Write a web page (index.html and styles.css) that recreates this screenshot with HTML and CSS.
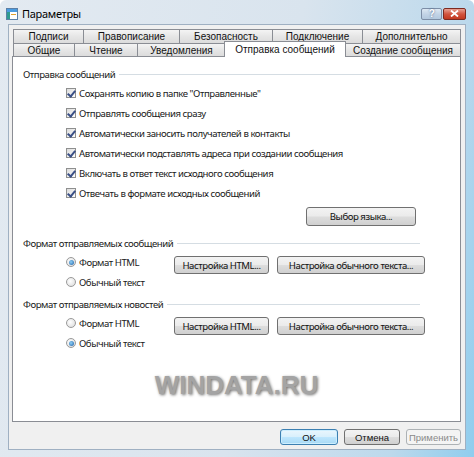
FILE: index.html
```html
<!DOCTYPE html>
<html lang="ru">
<head>
    <meta charset="UTF-8">
    <title>Параметры</title>
    <link rel="stylesheet" href="styles.css">
</head>
<body>
<div class="window">
    <!-- Title bar -->
    <div class="titlebar">
        <svg class="app-icon" width="12" height="12" viewBox="0 0 12 12">
            <rect x="0.5" y="0.5" width="11" height="11" fill="#fff" stroke="#5b7fa6"/>
            <rect x="1" y="1" width="10" height="3" fill="#4a9be0"/>
            <rect x="1" y="4" width="3" height="7" fill="#2f9a8f"/>
            <rect x="5" y="6" width="5" height="1" fill="#e0a030"/>
        </svg>
        <span class="title">Параметры</span>
        <div class="caption-buttons">
            <span class="cap-btn help">?</span>
            <span class="cap-btn close">
                <svg width="9" height="7" viewBox="0 0 9 7"><path d="M1 0.5 L8 6.5 M8 0.5 L1 6.5" stroke="#fff" stroke-width="1.8"/></svg>
            </span>
        </div>
    </div>

    <div class="client">
        <!-- Tabs -->
        <div class="tabs">
            <div class="tab-row row-back">
                <div class="tab">Подписи</div>
                <div class="tab">Правописание</div>
                <div class="tab">Безопасность</div>
                <div class="tab">Подключение</div>
                <div class="tab">Дополнительно</div>
            </div>
            <div class="tab-row row-front">
                <div class="tab">Общие</div>
                <div class="tab">Чтение</div>
                <div class="tab">Уведомления</div>
                <div class="tab active">Отправка сообщений</div>
                <div class="tab">Создание сообщения</div>
            </div>
        </div>

        <!-- Page: Отправка сообщений -->
        <div class="panel">
            <div class="group-head"><span>Отправка сообщений</span></div>
            <div class="options">
                <label class="opt"><span class="check on"></span>Сохранять копию в папке "Отправленные"</label>
                <label class="opt"><span class="check on"></span>Отправлять сообщения сразу</label>
                <label class="opt"><span class="check on"></span>Автоматически заносить получателей в контакты</label>
                <label class="opt"><span class="check on"></span>Автоматически подставлять адреса при создании сообщения</label>
                <label class="opt"><span class="check on"></span>Включать в ответ текст исходного сообщения</label>
                <label class="opt"><span class="check on"></span>Отвечать в формате исходных сообщений</label>
            </div>
            <div class="lang-row">
                <button class="btn lang">Выбор языка...</button>
            </div>

            <div class="group-head second"><span>Формат отправляемых сообщений</span></div>
            <div class="format">
                <div class="format-row">
                    <label class="opt radio-opt"><span class="radio on"></span>Формат HTML</label>
                    <button class="btn html">Настройка HTML...</button>
                    <button class="btn plain">Настройка обычного текста...</button>
                </div>
                <div class="format-row">
                    <label class="opt radio-opt"><span class="radio"></span>Обычный текст</label>
                </div>
            </div>

            <div class="group-head third"><span>Формат отправляемых новостей</span></div>
            <div class="format">
                <div class="format-row">
                    <label class="opt radio-opt"><span class="radio"></span>Формат HTML</label>
                    <button class="btn html">Настройка HTML...</button>
                    <button class="btn plain">Настройка обычного текста...</button>
                </div>
                <div class="format-row">
                    <label class="opt radio-opt"><span class="radio on"></span>Обычный текст</label>
                </div>
            </div>

            <div class="watermark">WINDATA.RU</div>
        </div>

        <!-- Dialog buttons -->
        <div class="footer">
            <button class="btn ok">OK</button>
            <button class="btn cancel">Отмена</button>
            <button class="btn apply" disabled>Применить</button>
        </div>
    </div>
</div>
</body>
</html>
```

FILE: styles.css
```css
* {
    box-sizing: border-box;
}
body {
    margin: 0;
    font-family: "Noto Sans", "Open Sans", sans-serif;
    font-size: 9.6px;
    letter-spacing: -0.45px;
    color: #1a1a1a;
}
.window {
    width: 474px;
    height: 457px;
    display: flex;
    flex-direction: column;
    padding: 0 8px 7px 8px;
    background: linear-gradient(100deg, #e3eaf1 0%, #d9e4ee 55%, #bcd9ec 85%, #8fcdee 100%);
    border-radius: 6px 6px 0 0;
    overflow: hidden;
}
.titlebar {
    height: 24px;
    margin: 0 -8px;
    padding: 3px 8px 0 6px;
    display: flex;
    align-items: center;
}
.app-icon {
    margin-right: 4px;
}
.title {
    font-size: 11px;
    letter-spacing: -0.3px;
    color: #000;
}
.caption-buttons {
    margin-left: auto;
    display: flex;
    gap: 1px;
}
.cap-btn {
    height: 12px;
    display: flex;
    align-items: center;
    justify-content: center;
    border: 1px solid #7d8ea6;
    border-radius: 2px;
}
.cap-btn.help {
    width: 21px;
    background: linear-gradient(#dde8f3, #c3d4e6 50%, #b3c8de);
    color: #fff;
    font-family: "Liberation Sans", sans-serif;
    font-weight: bold;
    font-size: 10px;
    text-shadow: 0 0 2px #3d5a80;
}
.cap-btn.close {
    width: 23px;
    border-color: #7d2a20;
    background: linear-gradient(#e8a193, #d2553f 50%, #c2381f);
}

/* client area */
.client {
    flex: 1;
    display: flex;
    flex-direction: column;
    padding: 4px 4px 0 3px;
    background: #f0f0f0;
    border: 1px solid #9fb0c2;
}

/* tabs */
.tabs {
    padding-left: 1px;
    font-family: "Liberation Sans", sans-serif;
    font-size: 10px;
    letter-spacing: 0;
    color: #111;
}
.tab-row {
    display: grid;
}
.row-back {
    height: 14px;
    grid-template-columns: 70px 96px 93px 90px 99px;
}
.row-front {
    height: 13px;
    grid-template-columns: 61px 63px 88px 120px 116px;
}
.tab {
    display: flex;
    align-items: center;
    justify-content: center;
    border: 1px solid #8a8d94;
    border-bottom: none;
    margin-right: -1px;
    background: linear-gradient(#f4f4f4, #e6e6e6 50%, #dcdcdc);
    white-space: nowrap;
}
.row-front .tab {
    padding-top: 1px;
}
.tab:last-child {
    margin-right: 0;
}
.tab.active {
    position: relative;
    z-index: 1;
    margin: -2px -1px -1px -1px;
    background: #fff;
    padding-bottom: 2px;
}

/* panel */
.panel {
    height: 366px;
    background: #fff;
    border: 1px solid #8a8d94;
    padding: 8px 40px 0 10px;
}
.group-head {
    height: 18px;
    display: flex;
    align-items: center;
    gap: 4px;
    color: #1a1a1a;
}
.group-head::after {
    content: "";
    flex: 1;
    border-top: 1px solid #d5dde3;
    margin-top: 1px;
}
.group-head.second {
    margin-top: 8px;
}
.group-head.third {
    margin-top: 3px;
}
.options {
    margin-left: 43px;
}
.opt {
    height: 20px;
    display: flex;
    align-items: center;
    white-space: nowrap;
}
.check, .radio {
    width: 10px;
    height: 10px;
    margin-right: 3px;
    flex: none;
    border: 1px solid #8e8f8f;
    background: linear-gradient(135deg, #dcdcdc, #fcfcfc);
    position: relative;
}
.check.on::after {
    content: "";
    position: absolute;
    left: 2px;
    top: 0;
    width: 3px;
    height: 6px;
    border: solid #3a4f86;
    border-width: 0 2px 2px 0;
    transform: rotate(40deg);
}
.radio {
    border-radius: 50%;
    border-color: #9a9a9a;
    background: radial-gradient(circle at 40% 40%, #fff, #d8d8d8);
}
.radio.on::after {
    content: "";
    position: absolute;
    left: 1.5px;
    top: 1.5px;
    width: 5px;
    height: 5px;
    border-radius: 50%;
    background: radial-gradient(circle at 40% 40%, #8fd0f5, #1e5fa8);
}
.lang-row {
    display: flex;
    justify-content: flex-end;
    padding-right: 4px;
    margin-top: 4px;
}

/* buttons */
.btn {
    font-family: "Noto Sans", "Open Sans", sans-serif;
    font-size: 9.6px;
    letter-spacing: -0.45px;
    color: #111;
    padding: 0;
    border: 1px solid #707070;
    border-radius: 3px;
    background: linear-gradient(#f3f3f3, #ebebeb 48%, #dddddd 52%, #d0d0d0);
    white-space: nowrap;
    flex: none;
}
.btn.lang {
    width: 110px;
    height: 19px;
}
.format {
    margin-left: 43px;
}
.format-row {
    display: flex;
    align-items: flex-start;
    height: 20px;
}
.radio-opt {
    width: 108px;
    flex: none;
}
.btn.html {
    width: 95px;
    height: 18px;
    margin-top: 4px;
}
.btn.plain {
    width: 148px;
    height: 18px;
    margin-top: 4px;
    margin-left: 8px;
}
.watermark {
    margin-top: 17px;
    margin-right: -30px;
    text-align: center;
    font-family: "Liberation Sans", sans-serif;
    font-weight: bold;
    font-size: 26px;
    letter-spacing: 0;
    color: #a4a4a4;
    text-shadow: 1px 1px 3px #707070;
}

/* footer */
.footer {
    display: flex;
    justify-content: flex-end;
    gap: 6px;
    margin-top: 7px;
}
.footer .btn {
    height: 16px;
    font-family: "Liberation Sans", sans-serif;
    font-size: 9.5px;
    letter-spacing: 0;
}
.btn.ok {
    width: 58px;
    border-color: #3c7fb1;
    background: linear-gradient(#eaf6fd, #d9f0fc 48%, #bee6fd 52%, #a7d9f5);
    box-shadow: inset 0 0 0 1px #cdeefe;
}
.btn.cancel {
    width: 56px;
}
.btn.apply {
    width: 55px;
    color: #8a8a8a;
    border-color: #adb2b5;
    background: #f4f4f4;
}
```
